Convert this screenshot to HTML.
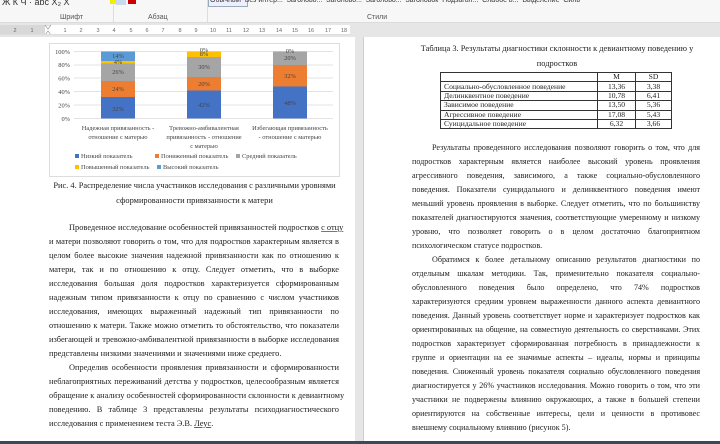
<!DOCTYPE html><html><head><meta charset="utf-8"><style>
*{margin:0;padding:0;box-sizing:border-box}
body{width:720px;height:444px;overflow:hidden;background:#e6e6e6;position:relative;font-family:"Liberation Serif",serif;color:#222}
.abs{position:absolute}
.rib{left:0;top:0;width:720px;height:23px;background:#f7f7f7;border-bottom:1px solid #dcdcdc;font-family:"Liberation Sans",sans-serif;font-size:7px;color:#555;overflow:hidden}
.ln{position:absolute;font-size:8.4px;white-space:nowrap;text-align:justify;text-align-last:justify;line-height:10px}
.r{font-size:8.1px}
.cap{font-size:8.4px;position:absolute;text-align:center;white-space:nowrap;line-height:10px}
table{border-collapse:collapse;font-size:7.6px}
td{border:1px solid #333;height:9.4px;line-height:8px;padding:0 3px}
</style></head><body>
<div class="abs rib">
<div class="abs" style="left:2px;top:-3px;font-size:9px;color:#333">Ж К Ч · abc X₂ X</div>
<div class="abs" style="left:110px;top:-2px;width:8px;height:6px;background:#ee0"></div>
<div class="abs" style="left:128px;top:-2px;width:8px;height:6px;background:#c00"></div>
<div class="abs" style="left:60px;top:14px">Шрифт</div>
<div class="abs" style="left:148px;top:14px">Абзац</div>
<div class="abs" style="left:113px;top:0;width:1px;height:22px;background:#ddd"></div>
<div class="abs" style="left:207px;top:0;width:1px;height:22px;background:#ddd"></div>
<div class="abs" style="left:116px;top:-2px;width:10px;height:7px;background:#c9d9ef"></div>
<div class="abs" style="left:208px;top:-2px;width:40px;height:9px;border:1px solid #9ab;background:#eef"></div>
<div class="abs" style="left:210px;top:-3px;font-size:7px;color:#333;white-space:nowrap">Обычный &nbsp;Без интер... &nbsp;Заголово... &nbsp;Заголово... &nbsp;Заголово... &nbsp;Заголовок &nbsp;Подзагол... &nbsp;Слабое в... &nbsp;Выделение &nbsp;Силь</div>
<div class="abs" style="left:367px;top:14px">Стили</div>
</div>
<div class="abs" style="left:0;top:25px;width:350px;height:10px;background:#fff;border-bottom:1px solid #ddd;font-family:'Liberation Sans',sans-serif;font-size:5.5px;color:#666;line-height:10px;overflow:hidden">
<div class="abs" style="left:0;top:0;width:45px;height:10px;background:#d8d8d8"></div>
<svg class="abs" style="left:0;top:0" width="350" height="10" font-family="Liberation Sans" font-size="5.5" fill="#666" text-anchor="middle">
<text x="15" y="7">2</text><text x="32" y="7">1</text><text x="65" y="7">1</text><text x="81" y="7">2</text><text x="98" y="7">3</text><text x="114" y="7">4</text><text x="131" y="7">5</text><text x="147" y="7">6</text><text x="163" y="7">7</text><text x="180" y="7">8</text><text x="196" y="7">9</text><text x="213" y="7">10</text><text x="229" y="7">11</text><text x="246" y="7">12</text><text x="262" y="7">13</text><text x="279" y="7">14</text><text x="295" y="7">15</text><text x="311" y="7">16</text><text x="328" y="7">17</text><text x="344" y="7">18</text>
<path d="M45 0 L51 0 L48 4 Z M45 10 L51 10 L48 6Z" fill="#fff" stroke="#888" stroke-width=".6"/>
</svg></div>
<div class="abs" style="left:0;top:37px;width:355px;height:404px;background:#fff"></div>
<div class="abs" style="left:363px;top:37px;width:357px;height:404px;background:#fff;border-left:1px solid #ccc"></div>
<div class="abs" style="left:0;top:441px;width:720px;height:3px;background:#3a4a5a"></div>
<div class="abs" style="left:49px;top:43px;width:291px;height:134px;border:1px solid #ddd"></div>
<svg class="abs" style="left:0;top:0" width="360" height="180">
<g stroke="#e3e3e3" stroke-width="1">
<line x1="74" y1="51.5" x2="333" y2="51.5"/><line x1="74" y1="65" x2="333" y2="65"/><line x1="74" y1="78" x2="333" y2="78"/><line x1="74" y1="91.5" x2="333" y2="91.5"/><line x1="74" y1="105" x2="333" y2="105"/><line x1="74" y1="118.5" x2="333" y2="118.5"/></g>
<g>
<rect x="101" y="97" width="34" height="21.5" fill="#4472c4"/><rect x="101" y="81" width="34" height="16" fill="#ed7d31"/><rect x="101" y="63.5" width="34" height="17.5" fill="#a5a5a5"/><rect x="101" y="61" width="34" height="2.5" fill="#ffc000"/><rect x="101" y="51.5" width="34" height="9.5" fill="#5b9bd5"/>
<rect x="187" y="90.5" width="34" height="28" fill="#4472c4"/><rect x="187" y="77" width="34" height="13.5" fill="#ed7d31"/><rect x="187" y="57" width="34" height="20" fill="#a5a5a5"/><rect x="187" y="51.5" width="34" height="5.5" fill="#ffc000"/>
<rect x="273" y="86.5" width="34" height="32" fill="#4472c4"/><rect x="273" y="65" width="34" height="21.5" fill="#ed7d31"/><rect x="273" y="51.5" width="34" height="13.5" fill="#a5a5a5"/>
</g>
<g font-family="Liberation Serif" font-size="6.4" fill="#444" text-anchor="middle">
<text x="118" y="111">32%</text><text x="118" y="91">24%</text><text x="118" y="74">26%</text><text x="118" y="64">4%</text><text x="118" y="58">14%</text>
<text x="204" y="107">42%</text><text x="204" y="86">20%</text><text x="204" y="69">30%</text><text x="204" y="56">8%</text><text x="204" y="52">0%</text>
<text x="290" y="105">48%</text><text x="290" y="78">32%</text><text x="290" y="60">20%</text><text x="290" y="53">0%</text>
<g text-anchor="end"><text x="70" y="54">100%</text><text x="70" y="67">80%</text><text x="70" y="80.5">60%</text><text x="70" y="94">40%</text><text x="70" y="107.5">20%</text><text x="70" y="121">0%</text></g>
<text x="118" y="130">Надежная привязанность -</text><text x="118" y="139">отношение с матерью</text>
<text x="204" y="130">Тревожно-амбивалентная</text><text x="204" y="139">привязанность - отношение</text><text x="204" y="148">с матерью</text>
<text x="290" y="130">Избегающая привязанность</text><text x="290" y="139">- отношение с матерью</text>
<g text-anchor="start">
<rect x="75" y="154" width="4" height="4" fill="#4472c4"/><text x="81" y="158">Низкий показатель</text>
<rect x="155" y="154" width="4" height="4" fill="#ed7d31"/><text x="161" y="158">Пониженный показатель</text>
<rect x="236" y="154" width="4" height="4" fill="#a5a5a5"/><text x="242" y="158">Средний показатель</text>
<rect x="75" y="165" width="4" height="4" fill="#ffc000"/><text x="81" y="169">Повышенный показатель</text>
<rect x="157" y="165" width="4" height="4" fill="#5b9bd5"/><text x="163" y="169">Высокий показатель</text>
</g></g></svg>
<div class="cap" style="left:49px;top:181px;width:291px">Рис. 4. Распределение числа участников исследования с различными уровнями</div>
<div class="cap" style="left:49px;top:196px;width:291px">сформированности привязанности к матери</div>
<div class="ln" style="left:69px;top:223px;width:270px">Проведенное исследование особенностей привязанностей подростков <u style="text-decoration-color:#66f">с отцу</u></div>
<div class="ln" style="left:49px;top:237px;width:290px">и матери позволяют говорить о том, что для подростков характерным является в</div>
<div class="ln" style="left:49px;top:251px;width:290px">целом более высокие значения надежной привязанности как по отношению к</div>
<div class="ln" style="left:49px;top:265px;width:290px">матери, так и по отношению к отцу. Следует отметить, что в выборке</div>
<div class="ln" style="left:49px;top:279px;width:290px">исследования большая доля подростков характеризуется сформированным</div>
<div class="ln" style="left:49px;top:293px;width:290px">надежным типом привязанности к отцу по сравнению с числом участников</div>
<div class="ln" style="left:49px;top:307px;width:290px">исследования, имеющих выраженный надежный тип привязанности по</div>
<div class="ln" style="left:49px;top:321px;width:290px">отношению к матери. Также можно отметить то обстоятельство, что показатели</div>
<div class="ln" style="left:49px;top:335px;width:290px">избегающей и тревожно-амбивалентной привязанности в выборке исследования</div>
<div class="ln" style="left:49px;top:349px;text-align-last:left">представлены низкими значениями и значениями ниже среднего.</div>
<div class="ln" style="left:69px;top:363px;width:270px">Определив особенности проявления привязанности и сформированности</div>
<div class="ln" style="left:49px;top:377px;width:290px">неблагоприятных переживаний детства у подростков, целесообразным является</div>
<div class="ln" style="left:49px;top:391px;width:290px">обращение к анализу особенностей сформированности склонности к девиантному</div>
<div class="ln" style="left:49px;top:405px;width:290px">поведению. В таблице 3 представлены результаты психодиагностического</div>
<div class="ln" style="left:49px;top:419px;text-align-last:left">исследования с применением теста Э.В. <u style="text-decoration-color:#c33">Леус</u>.</div>
<div class="cap" style="left:412px;top:44px;width:290px">Таблица 3. Результаты диагностики склонности к девиантному поведению у</div>
<div class="cap" style="left:412px;top:59px;width:290px">подростков</div>
<table class="abs" style="left:440px;top:72px;width:232px">
<tr><td style="width:157px"></td><td style="text-align:center;width:38px">M</td><td style="text-align:center">SD</td></tr>
<tr><td>Социально-обусловленное поведение</td><td style="text-align:center">13,36</td><td style="text-align:center">3,38</td></tr>
<tr><td>Делинквентное поведение</td><td style="text-align:center">10,78</td><td style="text-align:center">6,41</td></tr>
<tr><td>Зависимое поведение</td><td style="text-align:center">13,50</td><td style="text-align:center">5,36</td></tr>
<tr><td>Агрессивное поведение</td><td style="text-align:center">17,08</td><td style="text-align:center">5,43</td></tr>
<tr><td>Суицидальное поведение</td><td style="text-align:center">6,32</td><td style="text-align:center">3,66</td></tr>
</table>
<div class="ln r" style="left:432px;top:143px;width:268px">Результаты проведенного исследования позволяют говорить о том, что для</div>
<div class="ln r" style="left:412px;top:157px;width:288px">подростков характерным является наиболее высокий уровень проявления</div>
<div class="ln r" style="left:412px;top:171px;width:288px">агрессивного поведения, зависимого, а также социально-обусловленного</div>
<div class="ln r" style="left:412px;top:185px;width:288px">поведения. Показатели суицидального и делинквентного поведения имеют</div>
<div class="ln r" style="left:412px;top:199px;width:288px">меньший уровень проявления в выборке. Следует отметить, что по большинству</div>
<div class="ln r" style="left:412px;top:213px;width:288px">показателей диагностируются значения, соответствующие умеренному и низкому</div>
<div class="ln r" style="left:412px;top:227px;width:288px">уровню, что позволяет говорить о в целом достаточно благоприятном</div>
<div class="ln r" style="left:412px;top:241px;text-align-last:left">психологическом статусе подростков.</div>
<div class="ln r" style="left:432px;top:255px;width:268px">Обратимся к более детальному описанию результатов диагностики по</div>
<div class="ln r" style="left:412px;top:269px;width:288px">отдельным шкалам методики. Так, применительно показателя социально-</div>
<div class="ln r" style="left:412px;top:283px;width:288px">обусловленного поведения было определено, что 74% подростков</div>
<div class="ln r" style="left:412px;top:297px;width:288px">характеризуются средним уровнем выраженности данного аспекта девиантного</div>
<div class="ln r" style="left:412px;top:311px;width:288px">поведения. Данный уровень соответствует норме и характеризует подростков как</div>
<div class="ln r" style="left:412px;top:325px;width:288px;letter-spacing:-0.1px">ориентированных на общение, на совместную деятельность со сверстниками. Этих</div>
<div class="ln r" style="left:412px;top:339px;width:288px">подростков характеризует сформированная потребность в принадлежности к</div>
<div class="ln r" style="left:412px;top:353px;width:288px">группе и ориентации на ее значимые аспекты – идеалы, нормы и принципы</div>
<div class="ln r" style="left:412px;top:367px;width:288px;letter-spacing:-0.1px">поведения. Сниженный уровень показателя социально обусловленного поведения</div>
<div class="ln r" style="left:412px;top:381px;width:288px">диагностируется у 26% участников исследования. Можно говорить о том, что эти</div>
<div class="ln r" style="left:412px;top:395px;width:288px">участники не подвержены влиянию окружающих, а также в большей степени</div>
<div class="ln r" style="left:412px;top:409px;width:288px">ориентируются на собственные интересы, цели и ценности в противовес</div>
<div class="ln r" style="left:412px;top:423px;text-align-last:left">внешнему социальному влиянию (рисунок 5).</div>
</body></html>
